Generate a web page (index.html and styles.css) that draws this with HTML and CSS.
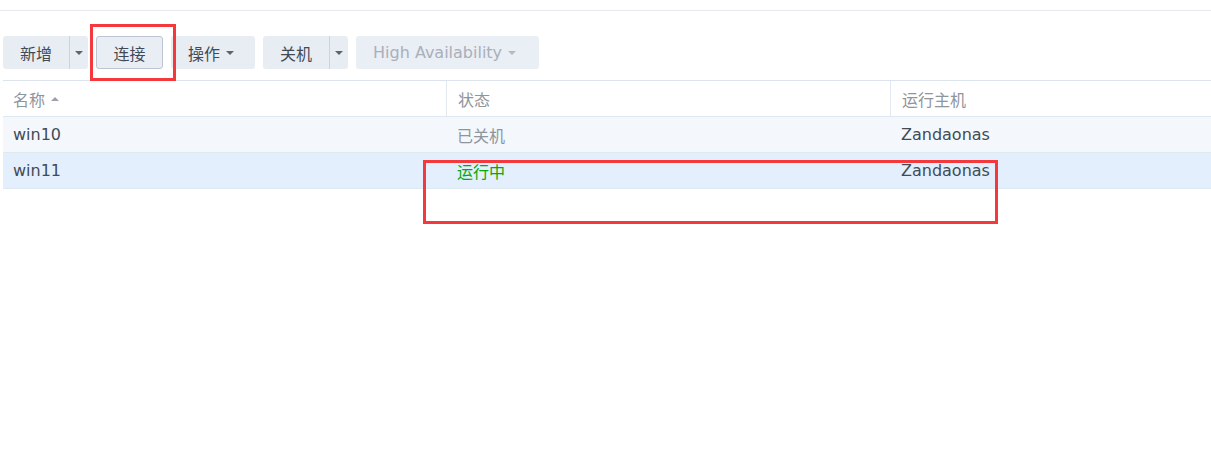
FILE: index.html
```html
<!DOCTYPE html>
<html lang="zh-CN">
<head>
<meta charset="UTF-8">
<title>Virtual Machine</title>
<link rel="stylesheet" href="styles.css">
</head>
<body>
<div class="topbar"></div>
<div class="toolbar">
  <div class="btn split">
    <span class="btn-main zh">新增</span>
    <span class="btn-arrow"><i class="caret"></i></span>
  </div>
  <div class="btn plain active zh">连接</div>
  <div class="btn menu"><span class="zh">操作</span> <i class="caret"></i></div>
  <div class="btn split">
    <span class="btn-main zh">关机</span>
    <span class="btn-arrow"><i class="caret"></i></span>
  </div>
  <div class="btn menu disabled ha">High Availability <i class="caret"></i></div>
</div>
<div class="grid">
  <div class="row head">
    <div class="cell"><span class="zh">名称</span> <i class="sort-up"></i></div>
    <div class="cell zh">状态</div>
    <div class="cell zh">运行主机</div>
  </div>
  <div class="row odd">
    <div class="cell">win10</div>
    <div class="cell off zh">已关机</div>
    <div class="cell">Zandaonas</div>
  </div>
  <div class="row selected">
    <div class="cell">win11</div>
    <div class="cell running zh">运行中</div>
    <div class="cell">Zandaonas</div>
  </div>
</div>
<div class="mark mark-connect"></div>
<div class="mark mark-status"></div>
</body>
</html>
```

FILE: styles.css
```css
body {
  margin: 0;
  background: #fff;
  font-family: 'DejaVu Sans', 'Noto Sans CJK SC', sans-serif;
  font-size: 16px;
  color: #414b55;
  position: relative;
  height: 461px;
  overflow: hidden;
}
.zh {
  font-family: 'Noto Sans CJK SC', sans-serif;
}
.topbar {
  height: 10px;
  border-bottom: 1px solid #e4e9ef;
}
.toolbar {
  display: flex;
  gap: 8px;
  margin: 25px 0 0 3px;
  height: 33px;
}
.btn {
  display: flex;
  align-items: center;
  height: 33px;
  box-sizing: border-box;
  background: #e8edf4;
  border-radius: 3px;
  font-size: 16px;
  color: #414b55;
}
.btn.split .btn-main {
  width: 66px;
  text-align: center;
}
.btn.split .btn-arrow {
  display: flex;
  align-items: center;
  justify-content: center;
  width: 18px;
  height: 33px;
  border-left: 1px solid #cbd3dd;
}
.btn.plain {
  width: 67px;
  justify-content: center;
}
.btn.active {
  border: 1px solid #bcc5d1;
  background: #e9eef5;
}
.btn.menu {
  padding: 0 21px 0 17px;
  gap: 6px;
}
.btn.ha {
  padding-right: 23px;
}
.btn.disabled {
  color: #a9b0b9;
  background: #eaeef5;
}
.caret {
  display: inline-block;
  width: 0;
  height: 0;
  border-left: 4px solid transparent;
  border-right: 4px solid transparent;
  border-top: 4px solid #5b6570;
}
.disabled .caret {
  border-top-color: #b3bac3;
}
.grid {
  margin: 11px 0 0 3px;
  border-top: 1px solid #dbe3ec;
}
.row {
  display: grid;
  grid-template-columns: 443px 444px 1fr;
  height: 35px;
  border-bottom: 1px solid #dfe7f0;
}
.row .cell {
  display: flex;
  align-items: center;
  padding-left: 11px;
  font-size: 16px;
}
.row .cell:first-child {
  padding-left: 10px;
}
.head .cell {
  color: #8e959d;
}
.head .cell + .cell {
  border-left: 1px solid #e2e8ef;
}
.sort-up {
  display: inline-block;
  width: 0;
  height: 0;
  margin-left: 6px;
  border-left: 4px solid transparent;
  border-right: 4px solid transparent;
  border-bottom: 4px solid #9aa1a9;
}
.odd {
  background: #f4f8fd;
}
.selected {
  background: #e3effc;
}
.off {
  color: #8f959c;
}
.running {
  color: #06a806;
}
.mark {
  position: absolute;
  border: 3px solid #f4393c;
  box-sizing: border-box;
}
.mark-connect {
  left: 90px;
  top: 24px;
  width: 86px;
  height: 57px;
}
.mark-status {
  left: 423px;
  top: 160px;
  width: 575px;
  height: 64px;
}
```
